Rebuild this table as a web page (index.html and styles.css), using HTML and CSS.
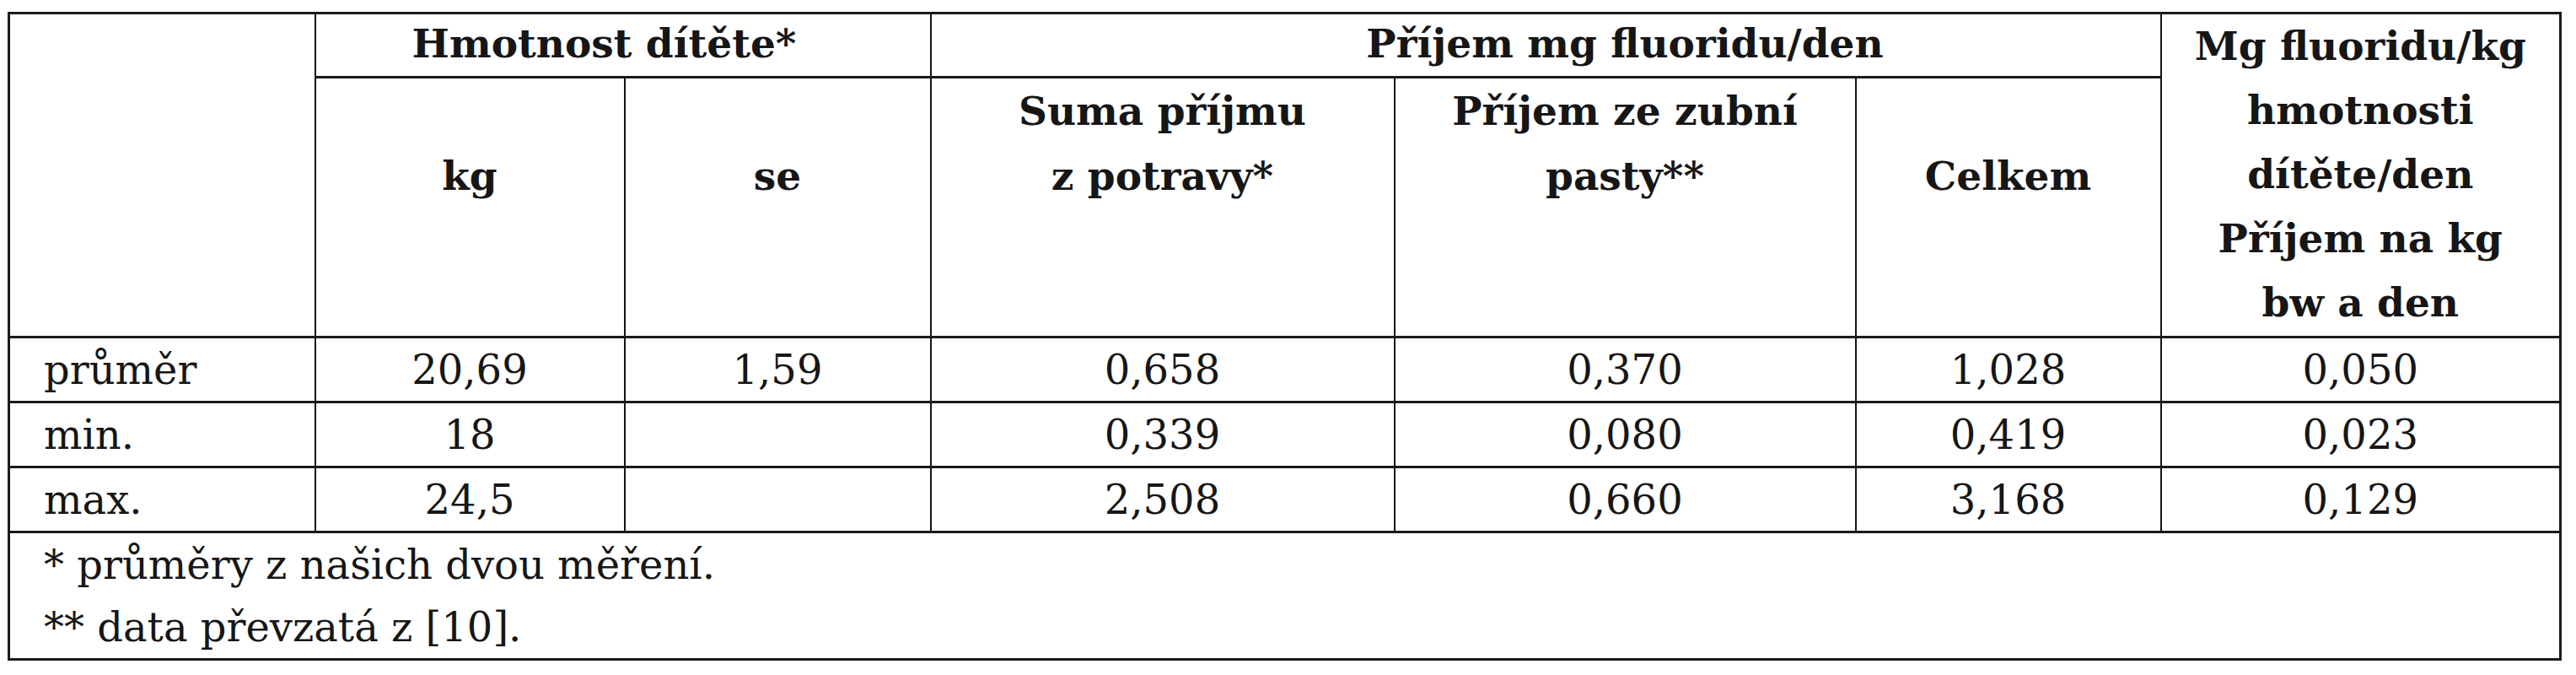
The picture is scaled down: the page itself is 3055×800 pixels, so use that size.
FILE: index.html
```html
<!DOCTYPE html>
<html lang="cs">
<head>
<meta charset="utf-8">
<title>Příjem fluoridu</title>
<link rel="stylesheet" href="styles.css">
</head>
<body>
<table class="data">
  <colgroup>
    <col class="c1"><col class="c2"><col class="c3"><col class="c4"><col class="c5"><col class="c6"><col class="c7">
  </colgroup>
  <thead>
    <tr class="h1">
      <th rowspan="2" class="blank"></th>
      <th colspan="2" class="grp grp-weight">Hmotnost dítěte*</th>
      <th colspan="3" class="grp grp-intake">Příjem mg fluoridu/den</th>
      <th rowspan="2" class="tall">Mg fluoridu/kg<br>hmotnosti<br>dítěte/den<br>Příjem na kg<br>bw a den</th>
    </tr>
    <tr class="h2">
      <th class="sub low">kg</th>
      <th class="sub low">se</th>
      <th class="sub">Suma příjmu<br>z potravy*</th>
      <th class="sub">Příjem ze zubní<br>pasty**</th>
      <th class="sub low">Celkem</th>
    </tr>
  </thead>
  <tbody>
    <tr class="row">
      <td class="label">průměr</td><td>20,69</td><td>1,59</td><td>0,658</td><td>0,370</td><td>1,028</td><td>0,050</td>
    </tr>
    <tr class="row">
      <td class="label">min.</td><td>18</td><td></td><td>0,339</td><td>0,080</td><td>0,419</td><td>0,023</td>
    </tr>
    <tr class="row">
      <td class="label">max.</td><td>24,5</td><td></td><td>2,508</td><td>0,660</td><td>3,168</td><td>0,129</td>
    </tr>
    <tr class="notes">
      <td colspan="7" class="note-cell">
        <div class="note">* průměry z našich dvou měření.</div>
        <div class="note">** data převzatá z [10].</div>
      </td>
    </tr>
  </tbody>
</table>
</body>
</html>
```

FILE: styles.css
```css
html, body {
  margin: 0;
  padding: 0;
  background: #ffffff;
}

body {
  padding: 14px 0 0 9px;
  font-family: "DejaVu Serif", "Liberation Serif", serif;
  color: #161616;
}

.data {
  border-collapse: collapse;
  table-layout: fixed;
  width: 3026px;
  border: 3px solid #1a1a1a;
  font-size: 48px;
}

.c1 { width: 363px; }
.c2 { width: 367px; }
.c3 { width: 363px; }
.c4 { width: 550px; }
.c5 { width: 547px; }
.c6 { width: 362px; }
.c7 { width: 474px; }

.data th,
.data td {
  padding: 0;
  border-left: 2px solid #141414;
  border-right: 2px solid #141414;
  border-top: 3px solid #1a1a1a;
  border-bottom: 3px solid #1a1a1a;
  text-align: center;
}

.data th {
  font-weight: bold;
  font-size: 47px;
  line-height: 76px;
}

.h1 { height: 76px; }
.h2 { height: 308px; }

.data th.grp { vertical-align: middle; line-height: 68px; padding-bottom: 4px; }
.data th.grp-weight { padding-right: 44px; }
.data th.grp-intake { padding-left: 188px; }

.data th.tall {
  vertical-align: top;
  line-height: 76px;
}

.data th.sub {
  vertical-align: top;
  line-height: 77px;
}

.data th.low { padding-top: 77px; }

.row { height: 77px; }
.data .row td {
  font-weight: normal;
  vertical-align: middle;
  line-height: 60px;
}

.data .row td.label {
  text-align: left;
  padding-left: 40px;
}

.notes { height: 151px; }

.data td.note-cell {
  text-align: left;
  vertical-align: middle;
  padding-left: 40px;
}

.note {
  line-height: 74px;
}
```
